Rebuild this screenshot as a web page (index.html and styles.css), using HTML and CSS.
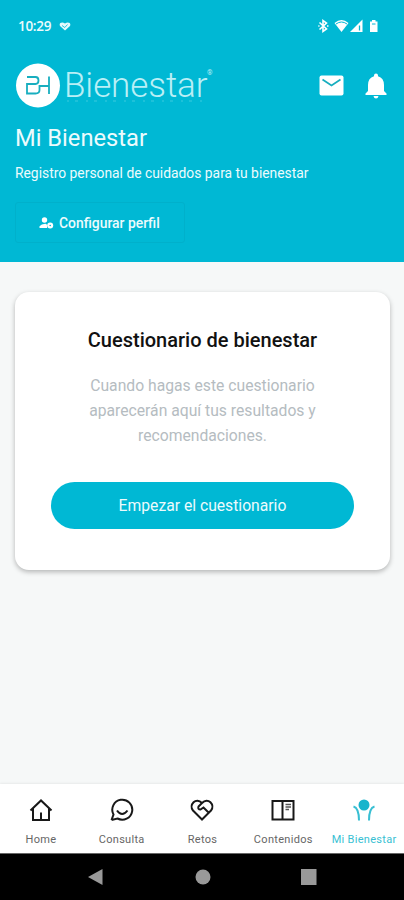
FILE: index.html
```html
<!DOCTYPE html>
<html lang="es">
<head>
<meta charset="utf-8">
<title>Mi Bienestar</title>
<link rel="stylesheet" href="styles.css">
</head>
<body>
<div class="app">
  <header class="hero">
    <div class="status">
      <span class="time">10:29</span>
      <svg class="status-heart" width="12" height="9" viewBox="0 0 12 9"><path d="M6 8.600 1 4C-.4 1.500 2.600-.8 6 1.600 9.400-.8 12.400 1.500 11 4z" fill="#e3f9fc"/><path d="M3 3.500 5.800 5.500 8.500 2.500" fill="none" stroke="#00b8d4" stroke-width=".8"/></svg>
      <svg class="status-icons" width="63" height="16" viewBox="0 0 63 16" fill="#fff">
        <path d="M1.500 4.500 8.500 11 5 13.500V2.500L8.500 5 1.500 11.500M.3 8H1.500M9 8H10.500" fill="none" stroke="#fff" stroke-width="1.600"/>
        <path d="M16.500 5Q23.500-1 30.500 5L23.500 14z"/><path d="M18 6Q23.500 2 29 6" fill="none" stroke="#00b8d4" stroke-width="1"/>
        <path d="M32 14 44.500 1.500V14z"/><path d="M41.500 7.500V12.500" stroke="#00b8d4" stroke-width="1.300"/>
        <path d="M52 3.500H54V2H57.500V3.500H59.500V14H52z"/><path d="M54 6H57.500" stroke="#00b8d4"/>
      </svg>
    </div>
    <div class="brand">
      <svg class="logo" width="46" height="46" viewBox="0 0 46 46"><circle cx="23" cy="22.500" r="22" fill="#fff"/><path d="M12 14H20.500Q23.500 14 23.500 17.500T20.500 21H12V30.500H20.500Q24.500 30.500 24.500 27V23H34M34 13.500V31" fill="none" stroke="#18aebf" stroke-width="1.800"/></svg>
      <div class="wordbox">
        <span class="wordmark">Bienestar</span>
        <svg class="tagline" width="140" height="2" viewBox="0 0 140 2"><path d="M3 1H138" stroke="#6fdbe8" stroke-width="1.500" stroke-dasharray="2 6 3 8" opacity=".35"/></svg>
      </div>
      <span class="reg">®</span>
      <svg class="mail" width="25" height="21" viewBox="0 0 25 21"><rect x=".5" y=".5" width="24" height="20" rx="2" fill="#fff"/><path d="M3.500 4.500 12.500 10.500 21.500 4.500" fill="none" stroke="#18aebf" stroke-width="1.800"/></svg>
      <svg class="bell" width="22" height="26" viewBox="0 0 22 26" fill="#fff"><path d="M11 .5Q13 .5 13 2.500V3.200Q19 5 19 12V18L21.500 20.500V22H.5V20.500L3 18V12Q3 5 9 3.200V2.500Q9 .5 11 .5M8.500 23H13.500Q13 25.500 11 25.500T8.500 23"/></svg>
    </div>
    <h1>Mi Bienestar</h1>
    <p class="sub">Registro personal de cuidados para tu bienestar</p>
    <div class="config">
      <svg width="15" height="12" viewBox="0 0 15 12" fill="#fff"><circle cx="5.500" cy="3" r="2.700"/><path d="M.5 11V9.300Q2.500 6.600 6.500 6.700 8 7 8 8.500V11z"/><circle cx="11.200" cy="8.500" r="3"/><circle cx="11.200" cy="8.500" r=".8" fill="#00b8d4"/></svg>
      <span>Configurar perfil</span>
    </div>
  </header>
  <main>
    <section class="card">
      <h2>Cuestionario de bienestar</h2>
      <p>Cuando hagas este cuestionario<br>aparecerán aquí tus resultados y<br>recomendaciones.</p>
      <div class="cta">Empezar el cuestionario</div>
    </section>
  </main>
  <nav class="tabs">
    <div class="tab"><svg viewBox="0 0 24 24"><path d="M1.500 12.500 12 2.500 22.500 12.500M4 10V22H20V10M12 22V14.500"/></svg><span>Home</span></div>
    <div class="tab"><svg viewBox="0 0 24 24"><path d="M1.500 22 3.500 16.500A10 10 0 1 1 7.500 20.500L1.500 22M7 12.500Q12 19.500 17.500 12.500"/></svg><span>Consulta</span></div>
    <div class="tab"><svg viewBox="0 0 24 24"><path d="M12 21.500 3 12.500C-1.500 7 6-1.500 12 5 18-1.500 25.500 7 21 12.500zM12 5 8.500 8.500Q7.500 11.500 10.500 11.500L13.500 9.500 18.500 14.500"/></svg><span>Retos</span></div>
    <div class="tab"><svg viewBox="0 0 24 24"><path d="M1.500 3H22.500V21.500H1.500zM11.500 3V21.500"/><path d="M14.500 6.500H20M14.500 9H20M14.500 11.500H18" stroke="#555" stroke-width="1.500"/></svg><span>Contenidos</span></div>
    <div class="tab active"><svg viewBox="0 0 24 24"><circle cx="12" cy="7" r="5.500" fill="#18b4cc" stroke="none"/><path d="M1.500 8.500Q7 10 7 22.500M22.500 8.500Q17 10 17 22.500"/></svg><span>Mi Bienestar</span></div>
  </nav>
  <footer class="system">
    <svg class="sys-back" width="15" height="16" viewBox="0 0 15 16"><path d="M0 8 14.500 0V16z" fill="#999"/></svg>
    <svg class="sys-home" width="16" height="16" viewBox="0 0 16 16"><circle cx="8" cy="8" r="7.500" fill="#999"/></svg>
    <svg width="16" height="16" viewBox="0 0 16 16"><rect width="15.500" height="16" fill="#999"/></svg>
  </footer>
</div>
</body>
</html>
```
FILE: styles.css
```css
* { box-sizing: border-box; }
body { margin: 0; font-family: Roboto, "Liberation Sans", sans-serif; }
h1, h2, p { margin: 0; }
svg { display: block; flex: none; }
.app { width: 404px; height: 900px; display: flex; flex-direction: column; background: #f6f8f8; }
.hero { height: 262px; background: #00b8d4; color: #ecfbfd; padding: 16px 15px 0; }
.status { height: 20px; display: flex; align-items: center; padding: 0 8px 0 3px; }
.time { font: 600 13.500px/20px "Open Sans", sans-serif; width: 41px; letter-spacing: -.3px; }
.status-icons { margin-left: auto; }
.brand { height: 46px; margin-top: 26px; display: flex; align-items: center; padding-top: 1px; }
.wordbox { width: 142px; height: 46px; margin-left: 3px; padding-top: 5px; display: flex; flex-direction: column; }
.wordmark { font: 300 35px/34px Roboto, sans-serif; height: 32px; padding-top: 1px; color: #b9eff6; white-space: nowrap; letter-spacing: -.1px; }
.reg { font-size: 7px; line-height: 8px; height: 34px; color: #b9eff6; margin-left: 1px; }
.mail { margin-left: auto; }
.bell { margin: 0 2px 0 21px; }
h1 { font: 400 23.700px/32px Roboto, sans-serif; margin-top: 14px; white-space: nowrap; }
.sub { font-size: 13.850px; line-height: 20px; margin-top: 9px; white-space: nowrap; }
.config { width: 170px; height: 41px; margin-top: 19px; border: 1px solid #00b0cb; border-radius: 3px; display: flex; align-items: center; padding-left: 23px; gap: 5px; font-size: 13.900px; font-weight: 500; white-space: nowrap; }
main { flex: 1; padding: 30px 14px 0 15px; }
.card { height: 278px; border-radius: 14px; background: #fff; box-shadow: 0 2px 5px rgba(0,0,0,.27); padding: 34px 36px 0; text-align: center; }
h2 { font: 500 20px/28px Roboto, sans-serif; color: #111; white-space: nowrap; }
.card p { margin-top: 19px; font-size: 15.700px; line-height: 25px; color: #b5bcc1; white-space: nowrap; }
.cta { height: 47px; margin-top: 34px; border-radius: 24px; background: #00b8d4; color: #ecfbfd; font-size: 15.700px; line-height: 48px; }
.tabs { height: 69px; background: #fff; display: grid; grid-template-columns: repeat(5, 1fr); box-shadow: 0 -1px 2px rgba(0,0,0,.06); }
.tab { display: flex; flex-direction: column; align-items: center; padding: 14px 0 0 1px; font-size: 11px; line-height: 16px; color: #666; white-space: nowrap; letter-spacing: .3px; }
.tab svg { width: 24px; height: 24px; margin-bottom: 10px; fill: none; stroke: #181818; stroke-width: 2; }
.tab.active { color: #38bfd3; }
.active svg { stroke: #38bfd3; }
.system { height: 47px; background: #000; border-top: 1px solid #666; display: flex; align-items: center; padding-left: 88px; }
.sys-back { margin-right: 92px; }
.sys-home { margin-right: 90px; }
```
